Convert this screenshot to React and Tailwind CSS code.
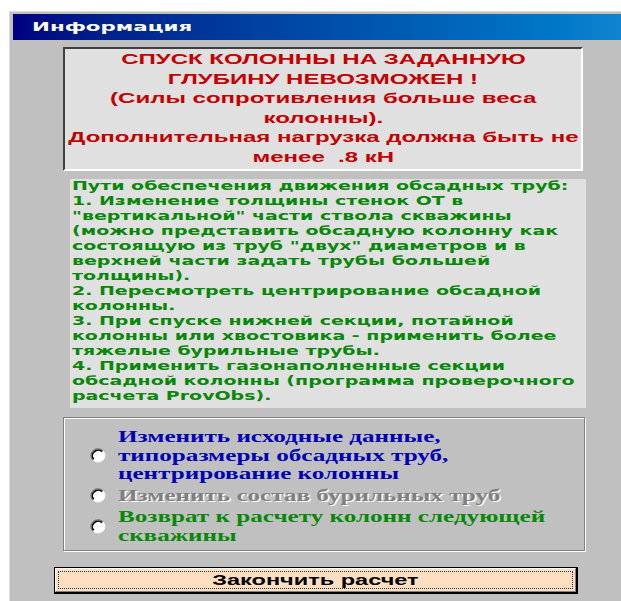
import React from 'react';

const warning = [
  'СПУСК КОЛОННЫ НА ЗАДАННУЮ',
  'ГЛУБИНУ НЕВОЗМОЖЕН !',
  '(Силы сопротивления больше веса',
  'колонны).',
  'Дополнительная нагрузка должна быть не',
  'менее  .8 кН',
];

const hints = [
  'Пути обеспечения движения обсадных труб:',
  '1. Изменение толщины стенок ОТ в',
  '"вертикальной" части ствола скважины',
  '(можно представить обсадную колонну как',
  'состоящую из труб "двух" диаметров и в',
  'верхней части задать трубы большей',
  'толщины).',
  '2. Пересмотреть центрирование обсадной',
  'колонны.',
  '3. При спуске нижней секции, потайной',
  'колонны или хвостовика - применить более',
  'тяжелые бурильные трубы.',
  '4. Применить газонаполненные секции',
  'обсадной колонны (программа проверочного',
  'расчета ProvObs).',
];

// classic sunken radio circle
const Radio = () => (
  <svg width="16" height="15" viewBox="0 0 16 15" className="shrink-0">
    <ellipse cx="8" cy="7.5" rx="7" ry="6.5" fill="#ffffff" />
    <path d="M13 2.9A7 6.5 0 0 0 3 12.1" fill="none" stroke="#707070" strokeWidth="1.2" />
    <path d="M12 3.6A5.8 5.4 0 0 0 3.8 11.2" fill="none" stroke="#000000" strokeWidth="1.6" />
    <path d="M3 12.1A7 6.5 0 0 0 13 2.9" fill="none" stroke="#f4f4f4" strokeWidth="1" />
  </svg>
);

const RadioItem = ({ lines, className, style }) => (
  <div className="flex items-center">
    <div className="w-[54px] flex justify-end pr-[12px]">
      <Radio />
    </div>
    <div className={`origin-left scale-x-[1.57] w-max whitespace-nowrap text-[16px] leading-[18.5px] font-bold ${className}`} style={style}>
      {lines.map((l, i) => (
        <div key={i}>{l}</div>
      ))}
    </div>
  </div>
);

export default function App() {
  return (
    <div className="min-h-[601px] bg-white overflow-hidden pt-[11px] pl-[9px]">
      <div className="border-l border-t border-[#dcdcdc] bg-[#c0c0c0] pl-[3px] pt-[2px] h-[590px]">
        <div
          className="h-[26px] flex items-center pl-[19px] bg-gradient-to-r from-[#000080] to-[#1084d0]"
          style={{ fontFamily: '"DejaVu Sans", sans-serif' }}
        >
          <span className="inline-block origin-left scale-x-[1.78] text-white font-bold text-[12px]">
            Информация
          </span>
        </div>

        <div className="pt-[7px]">
          <div
            className="ml-[50px] w-[520px] h-[124px] bg-[#e0e0e0] border-2 border-t-[#404040] border-l-[#404040] border-r-white border-b-white text-[#c40000] font-bold text-[15px] leading-[19.5px]"
            style={{ fontFamily: '"Liberation Sans", Arial, sans-serif' }}
          >
            {warning.map((l, i) => (
              <div key={i} className="text-center whitespace-pre">
                <span className="inline-block scale-x-[1.6]">{l}</span>
              </div>
            ))}
          </div>

          <div
            className="ml-[57px] mt-[8px] w-[516px] h-[229px] bg-[#e0e0e0] pl-[2px] text-[#088808] font-bold text-[12px] leading-[15px]"
            style={{ fontFamily: '"DejaVu Sans", Verdana, sans-serif' }}
          >
            <div className="origin-left scale-x-[1.58] w-max whitespace-nowrap">
              {hints.map((l, i) => (
                <div key={i}>{l}</div>
              ))}
            </div>
          </div>

          <div
            className="ml-[50px] mt-[9px] w-[522px] h-[134px] border border-[#808080] shadow-[inset_1px_1px_0_#ffffff,1px_1px_0_#ffffff] pt-[10px] flex flex-col gap-[3px]"
            style={{ fontFamily: '"Liberation Serif", "Times New Roman", serif' }}
          >
            <RadioItem
              className="text-[#0000b8]"
              lines={['Изменить исходные данные,', 'типоразмеры обсадных труб,', 'центрирование колонны']}
            />
            <RadioItem
              className="text-[#808080]"
              style={{ textShadow: '1px 1px 0 #ffffff' }}
              lines={['Изменить состав бурильных труб']}
            />
            <RadioItem
              className="text-[#088808]"
              lines={['Возврат к расчету колонн следующей', 'скважины']}
            />
          </div>

          <div className="ml-[41px] mt-[16px] w-[524px] h-[27px] border border-black border-r-2 border-b-2">
            <div className="h-full border border-t-white border-l-white border-r-[#808080] border-b-[#808080] bg-[#ffdfc2] p-[2px]">
              <div
                className="h-full border border-dotted border-[#303030] flex items-center justify-center text-black font-bold text-[14px]"
                style={{ fontFamily: '"Liberation Sans", Arial, sans-serif' }}
              >
                <span className="inline-block scale-x-[1.68]">Закончить расчет</span>
              </div>
            </div>
          </div>
        </div>
      </div>
    </div>
  );
}
